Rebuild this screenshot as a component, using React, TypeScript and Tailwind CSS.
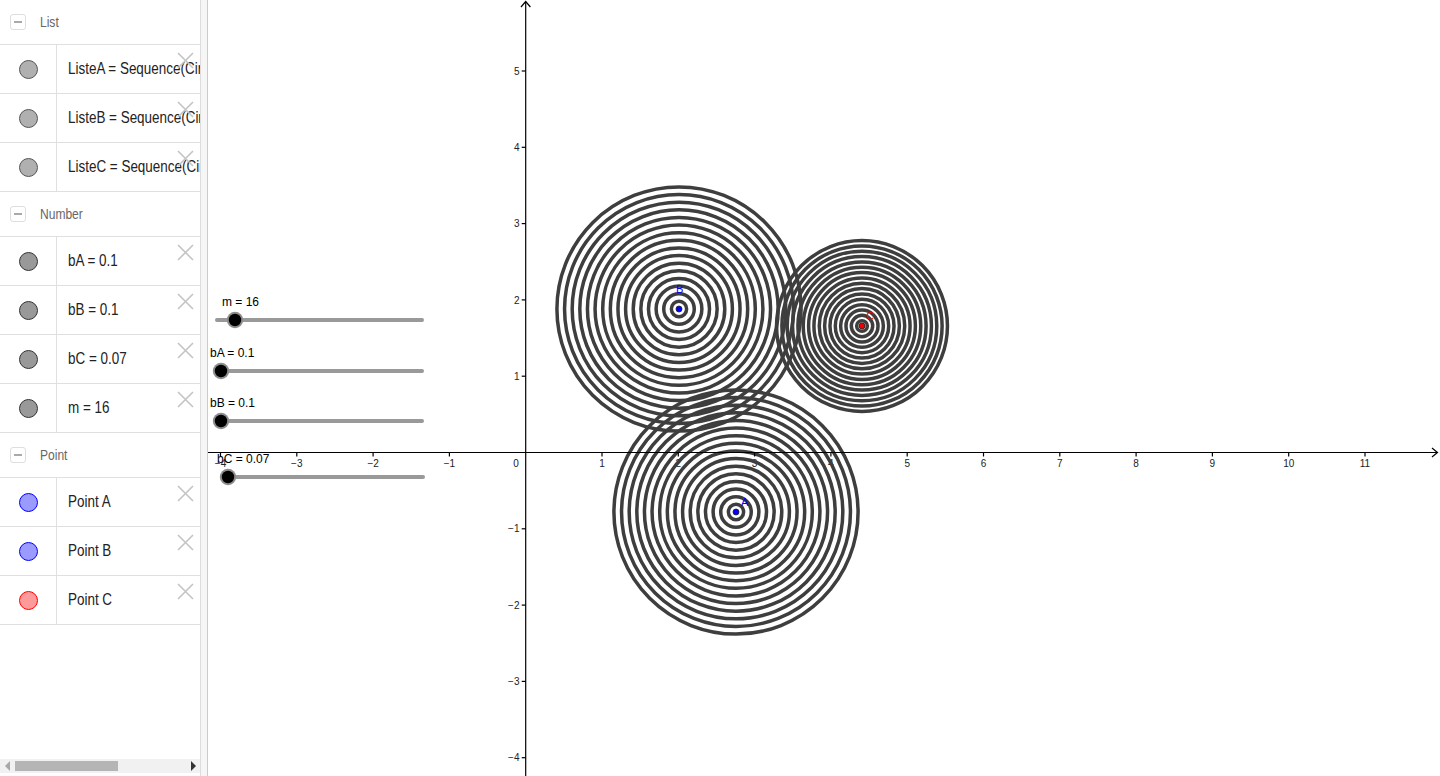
import React from 'react';

type Item = { label: string; fill: string; stroke: string };
type Section = { title: string; items: Item[] };

const sections: Section[] = [
    {
        title: 'List',
        items: [
            { label: 'ListeA = Sequence(Circle(A, bA k), k, 1, m)', fill: '#b0b0b0', stroke: '#555555' },
            { label: 'ListeB = Sequence(Circle(B, bB k), k, 1, m)', fill: '#b0b0b0', stroke: '#555555' },
            { label: 'ListeC = Sequence(Circle(C, bC k), k, 1, m)', fill: '#b0b0b0', stroke: '#555555' },
        ],
    },
    {
        title: 'Number',
        items: [
            { label: 'bA = 0.1', fill: '#999999', stroke: '#333333' },
            { label: 'bB = 0.1', fill: '#999999', stroke: '#333333' },
            { label: 'bC = 0.07', fill: '#999999', stroke: '#333333' },
            { label: 'm = 16', fill: '#999999', stroke: '#333333' },
        ],
    },
    {
        title: 'Point',
        items: [
            { label: 'Point A', fill: '#9a9aff', stroke: '#0000ff' },
            { label: 'Point B', fill: '#9a9aff', stroke: '#0000ff' },
            { label: 'Point C', fill: '#ff9a9a', stroke: '#ff0000' },
        ],
    },
];

// graphics view: origin and scale in page pixels
const OX = 525.7;
const OY = 452.5;
const U = 76.3;
const M = 16;

const rings = [
    { cx: 736, cy: 512, step: 0.1 },
    { cx: 679, cy: 309, step: 0.1 },
    { cx: 862, cy: 326, step: 0.07 },
];

const sliders = [
    { label: 'm = 16', lx: 222, ly: 306, x1: 217, x2: 422, y: 320, knob: 235 },
    { label: 'bA = 0.1', lx: 210, ly: 357, x1: 220, x2: 422, y: 371, knob: 221 },
    { label: 'bB = 0.1', lx: 210, ly: 407, x1: 220, x2: 422, y: 421, knob: 221 },
    { label: 'bC = 0.07', lx: 217, ly: 463, x1: 222, x2: 423, y: 477, knob: 228 },
];

const font = '"Liberation Sans", Arial, sans-serif';

function MinusBox() {
    return (
        <span className="flex w-4 h-4 items-center justify-center rounded-[3px] border border-[#dedede]">
            <span className="block w-2 h-[1.5px] bg-[#aaaaaa]" />
        </span>
    );
}

function CloseIcon() {
    return (
        <svg width="17" height="17" viewBox="0 0 17 17" className="absolute right-[6px] top-[7px]">
            <path d="M1 1 L16 16 M16 1 L1 16" stroke="#c4c4c4" strokeWidth="1.6" fill="none" />
        </svg>
    );
}

function AlgebraPanel() {
    return (
        <div className="flex flex-col w-[200px] h-full bg-white overflow-hidden" style={{ fontFamily: font }}>
            {sections.map((s) => (
                <div key={s.title}>
                    <div className="flex items-center gap-[14px] h-[45px] pl-[10px] border-b border-[#e0e0e0]">
                        <MinusBox />
                        <span className="inline-block origin-left scale-x-[0.86] text-[14px] text-[#666666]">{s.title}</span>
                    </div>
                    {s.items.map((it) => (
                        <div key={it.label} className="relative flex h-[49px] border-b border-[#e0e0e0]">
                            <div className="flex w-[57px] shrink-0 items-center justify-center border-r border-[#e0e0e0]">
                                <span
                                    className="block w-[19px] h-[19px] rounded-full border"
                                    style={{ background: it.fill, borderColor: it.stroke }}
                                />
                            </div>
                            <div className="flex flex-1 items-center pl-[11px] overflow-hidden">
                                <span className="inline-block origin-left scale-x-[0.84] whitespace-nowrap text-[16px] text-[#222222]">
                                    {it.label}
                                </span>
                            </div>
                            <CloseIcon />
                        </div>
                    ))}
                </div>
            ))}
            <div className="mt-auto mb-[3px] flex h-[14px] items-center bg-[#f1f1f1]">
                <span className="ml-[5px] w-0 h-0 border-y-[5px] border-y-transparent border-r-[5px] border-r-[#a8a8a8]" />
                <span className="ml-[5px] h-[10px] w-[103px] bg-[#b5b5b5]" />
                <span className="ml-auto mr-[4px] w-0 h-0 border-y-[5px] border-y-transparent border-l-[5px] border-l-[#333333]" />
            </div>
        </div>
    );
}

function Graphics() {
    const xs = [-4, -3, -2, -1, 1, 2, 3, 4, 5, 6, 7, 8, 9, 10, 11];
    const ys = [-4, -3, -2, -1, 1, 2, 3, 4, 5];
    const fmt = (n: number) => (n < 0 ? '\u2212' + Math.abs(n) : String(n));
    return (
        <svg className="block w-full h-full" viewBox="208 0 1232 776" style={{ fontFamily: font }}>
            <g fontSize="10" fill="#222222">
                {xs.map((n) => (
                    <text key={'x' + n} x={OX + n * U} y={466.5} textAnchor="middle">
                        {fmt(n)}
                    </text>
                ))}
                <text x={516} y={466.5} textAnchor="middle">0</text>
                {ys.map((n) => (
                    <text key={'y' + n} x={519.5} y={OY - n * U + 3.6} textAnchor="end">
                        {fmt(n)}
                    </text>
                ))}
            </g>

            {rings.map((r, i) => (
                <g key={i} fill="none" stroke="#3e3e3e" strokeWidth="3.5">
                    {Array.from({ length: M }).map((_, k) => (
                        <circle key={k} cx={r.cx} cy={r.cy} r={(k + 1) * r.step * U} />
                    ))}
                </g>
            ))}

            <g stroke="#000000" strokeWidth="1.2" fill="none">
                <line x1={208} y1={OY} x2={1437} y2={OY} />
                <path d="M1432 448 L1437.5 452.5 L1432 457" />
                <line x1={OX} y1={2} x2={OX} y2={776} />
                <path d="M521 7 L525.7 1.5 L530.4 7" />
                {xs.map((n) => (
                    <line key={'tx' + n} x1={OX + n * U} y1={OY} x2={OX + n * U} y2={OY + 4} />
                ))}
                {ys.map((n) => (
                    <line key={'ty' + n} x1={OX - 4} y1={OY - n * U} x2={OX} y2={OY - n * U} />
                ))}
            </g>

            <g>
                <circle cx={736} cy={512} r={3} fill="#0000ff" stroke="#202020" strokeWidth="0.8" />
                <circle cx={679} cy={309} r={3} fill="#0000ff" stroke="#202020" strokeWidth="0.8" />
                <circle cx={862} cy={326} r={3} fill="#ee0000" stroke="#202020" strokeWidth="0.8" />
                <text x={741} y={506} fontSize="11" fill="#0000ff">A</text>
                <text x={676} y={293} fontSize="11" fill="#0000ff">B</text>
                <text x={866} y={320} fontSize="11" fill="#ee0000">C</text>
            </g>

            {sliders.map((s) => (
                <g key={s.label}>
                    <text x={s.lx} y={s.ly} fontSize="12" fill="#000000">{s.label}</text>
                    <line x1={s.x1} y1={s.y} x2={s.x2} y2={s.y} stroke="#999999" strokeWidth="4" strokeLinecap="round" />
                    <circle cx={s.knob} cy={s.y} r={8.2} fill="#8c8c8c" />
                    <circle cx={s.knob} cy={s.y} r={6.2} fill="#000000" />
                </g>
            ))}
        </svg>
    );
}

export default function App() {
    return (
        <div className="flex w-[1440px] h-[776px] bg-white overflow-hidden">
            <AlgebraPanel />
            <div className="w-[8px] h-full shrink-0 border-l border-r border-l-[#dddddd] border-r-[#cccccc] bg-[#f6f6f6]" />
            <div className="flex-1 h-full">
                <Graphics />
            </div>
        </div>
    );
}
